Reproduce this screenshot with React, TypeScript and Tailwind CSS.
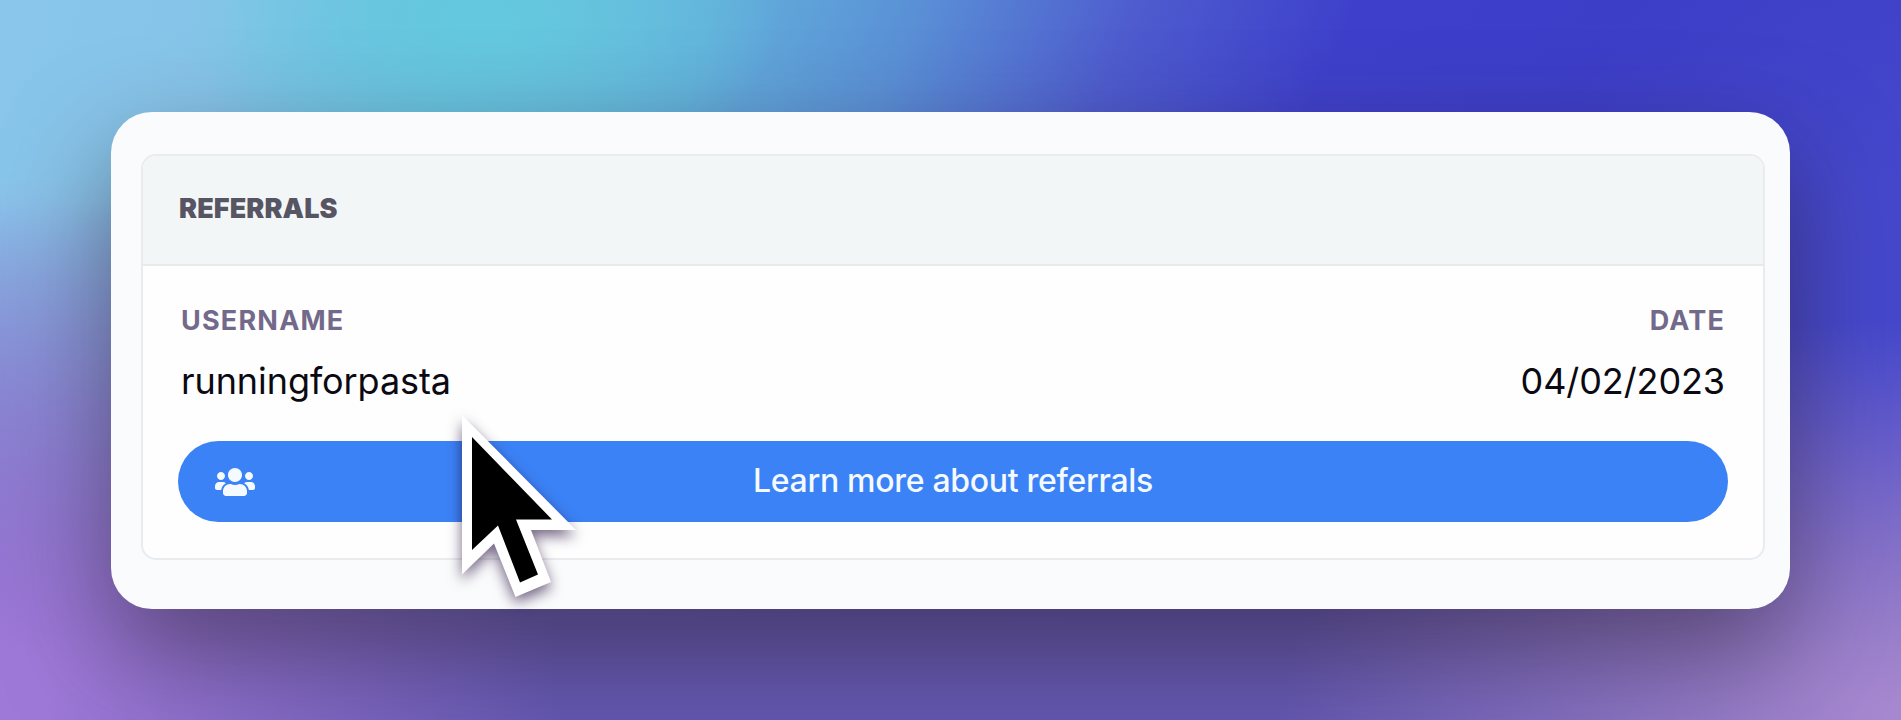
import { FaUsers } from "react-icons/fa";

function Cursor() {
  return (
    <svg
      className="absolute left-[440px] top-[400px] h-[210px] w-[160px] overflow-visible drop-shadow-[0_6px_7px_rgba(25,0,50,0.6)]"
      viewBox="440 400 160 210"
      aria-hidden="true"
    >
      <polygon points="462,415 576,530 531,530 551,582 515.5,597 494,543.5 462,574.5" fill="#fff" />
      <polygon points="472,437 552,519.5 516,519.5 538,574.5 520,582.5 498,525.5 472,550" fill="#000" />
    </svg>
  );
}

const backdrop =
  "bg-[radial-gradient(560px_520px_at_0%_96%,#9f79d8_8%,transparent),radial-gradient(620px_400px_at_100%_100%,#a688d0_4%,transparent),radial-gradient(360px_420px_at_100%_38%,#4548cc_20%,transparent),linear-gradient(to_top,#6458b2_0%,#6458b2_12%,transparent_72%),radial-gradient(300px_170px_at_480px_20px,#64c8de_10%,transparent),linear-gradient(112deg,#8ac6ec_0%,#86c4e8_11%,#6cbfe0_22%,#62aedb_33%,#5a90d6_42%,#4e5cce_52%,#3e40cb_62%,#3b3cc6_86%,#4a50d2_100%)]";

export default function App() {
  return (
    <main
      className={`relative flex h-[720px] w-[1901px] items-center justify-center overflow-hidden font-['Inter',sans-serif] ${backdrop}`}
    >
      <section className="flex h-[497px] w-[1679px] flex-col rounded-[41px] bg-[#fafbfc] pb-[49px] pl-[30px] pr-[25px] pt-[42px] shadow-[0_44px_105px_rgba(45,30,45,0.52)]">
        <div className="flex grow flex-col overflow-hidden rounded-[15px] border-2 border-[#e9ecef] bg-[#fefefe]">
          <header className="flex h-[110px] items-center border-b-2 border-[#e6eaed] bg-[#f3f6f7] pb-[2px] pl-[36px]">
            <h2 className="text-[27px] font-black leading-none tracking-[0.1px] text-[#575563]">REFERRALS</h2>
          </header>
          <div className="flex grow flex-col justify-between px-[35px] pb-[36px] pt-[38px]">
            <div className="flex justify-between px-[3px]">
              <div className="flex flex-col gap-[19px]">
                <div className="text-[27px] font-bold leading-[34px] tracking-[1.2px] text-[#73698a]">USERNAME</div>
                <div className="text-[36px] leading-[48px] tracking-[-0.08px] text-[#0b0911]">runningforpasta</div>
              </div>
              <div className="flex flex-col items-end gap-[19px]">
                <div className="text-[27px] font-bold leading-[34px] tracking-[1.2px] text-[#73698a]">DATE</div>
                <div className="text-[36px] leading-[48px] tracking-[-0.1px] text-[#0b0911]">04/02/2023</div>
              </div>
            </div>
            <button className="grid h-[81px] grid-cols-[40px_1fr_40px] items-center rounded-full bg-[#3b82f6] px-[37px] pb-[1px] text-[32px] font-medium tracking-[-0.3px] text-[#f4faff]">
              <FaUsers className="h-[32px] w-[40px] translate-y-px" />
              <span>Learn more about referrals</span>
            </button>
          </div>
        </div>
      </section>
      <Cursor />
    </main>
  );
}
